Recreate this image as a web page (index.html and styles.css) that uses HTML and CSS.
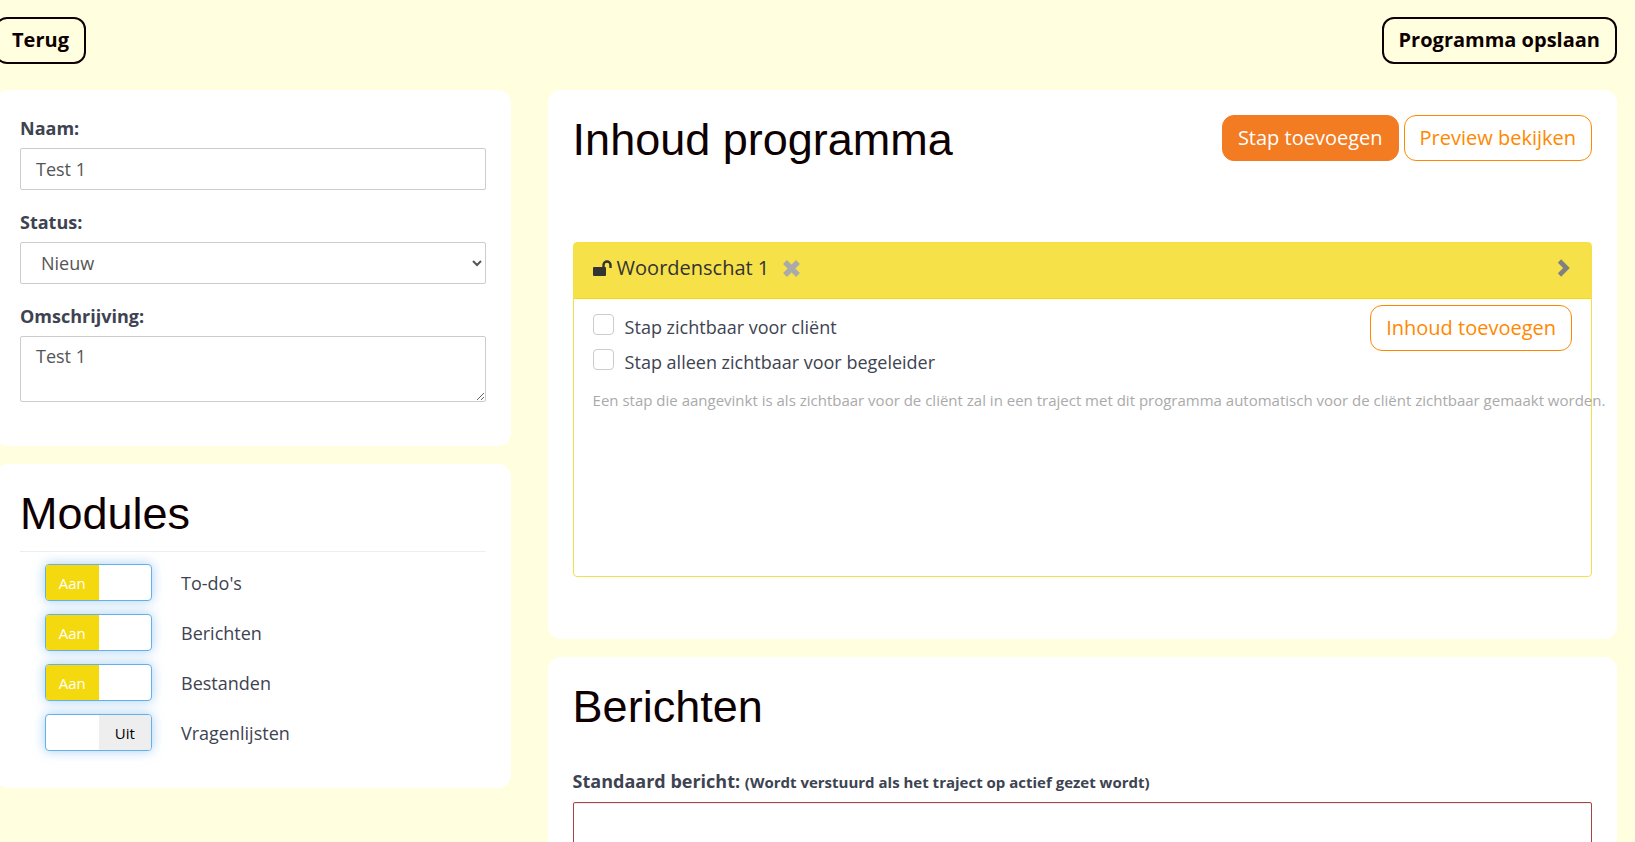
FILE: index.html
```html
<!DOCTYPE html>
<html lang="nl">
<head>
    <meta charset="UTF-8">
    <meta name="viewport" content="width=device-width, initial-scale=1.0">
    <title>Programma bewerken</title>
    <link rel="stylesheet" href="styles.css">
</head>
<body>
    <div class="page">
        <div class="top-bar">
            <button type="button" class="btn btn-dark">Terug</button>
            <button type="submit" form="programma" class="btn btn-dark">Programma opslaan</button>
        </div>

        <form id="programma" class="columns">
            <div class="column">
                <div class="card">
                    <div class="form-group">
                        <label for="naam">Naam:</label>
                        <input type="text" id="naam" class="form-control" value="Test 1">
                    </div>
                    <div class="form-group">
                        <label for="status">Status:</label>
                        <select id="status" class="form-control">
                            <option>Nieuw</option>
                        </select>
                    </div>
                    <div class="form-group">
                        <label for="omschrijving">Omschrijving:</label>
                        <textarea id="omschrijving" class="form-control description">Test 1</textarea>
                    </div>
                </div>

                <div class="card modules">
                    <h2>Modules</h2>
                    <hr>
                    <label class="module">
                        <input type="checkbox" checked>
                        <span class="switch"><span class="on">Aan</span><span class="off">Uit</span></span>
                        <span>To-do's</span>
                    </label>
                    <label class="module">
                        <input type="checkbox" checked>
                        <span class="switch"><span class="on">Aan</span><span class="off">Uit</span></span>
                        <span>Berichten</span>
                    </label>
                    <label class="module">
                        <input type="checkbox" checked>
                        <span class="switch"><span class="on">Aan</span><span class="off">Uit</span></span>
                        <span>Bestanden</span>
                    </label>
                    <label class="module">
                        <input type="checkbox">
                        <span class="switch"><span class="on">Aan</span><span class="off">Uit</span></span>
                        <span>Vragenlijsten</span>
                    </label>
                </div>
            </div>

            <div class="column">
                <div class="card content">
                    <div class="card-header">
                        <h2>Inhoud programma</h2>
                        <div class="buttons">
                            <button type="button" class="btn btn-primary">Stap toevoegen</button>
                            <button type="button" class="btn btn-outline">Preview bekijken</button>
                        </div>
                    </div>

                    <div class="step">
                        <div class="step-header">
                            <svg class="lock" viewBox="0 0 19 16" width="19" height="16" aria-hidden="true">
                                <rect x="0" y="7" width="13" height="9" rx="1" fill="#333"/>
                                <path d="M10.5 8V5a3.5 3.5 0 0 1 7 0v3" fill="none" stroke="#333" stroke-width="2.4"/>
                            </svg>
                            <span class="step-title">Woordenschat 1</span>
                            <button type="button" class="icon-btn" aria-label="Verwijderen">
                                <svg viewBox="0 0 17 17" width="17" height="17">
                                    <path d="M2 2l13 13M15 2l-13 13" stroke="#aaa" stroke-width="5.4"/>
                                </svg>
                            </button>
                            <button type="button" class="icon-btn toggle-step" aria-label="Uitklappen">
                                <svg viewBox="0 0 14 18" width="14" height="18">
                                    <path d="M2.5 2l7 7-7 7" fill="none" stroke="#808080" stroke-width="4.6"/>
                                </svg>
                            </button>
                        </div>
                        <div class="step-body">
                            <div class="step-options">
                                <div>
                                    <label class="check"><input type="checkbox"><span>Stap zichtbaar voor cliënt</span></label>
                                    <label class="check"><input type="checkbox"><span>Stap alleen zichtbaar voor begeleider</span></label>
                                </div>
                                <button type="button" class="btn btn-outline">Inhoud toevoegen</button>
                            </div>
                            <p class="hint">Een stap die aangevinkt is als zichtbaar voor de cliënt zal in een traject met dit programma automatisch voor de cliënt zichtbaar gemaakt worden.</p>
                        </div>
                    </div>
                </div>

                <div class="card messages">
                    <h2>Berichten</h2>
                    <div class="form-group">
                        <label for="bericht">Standaard bericht: <small>(Wordt verstuurd als het traject op actief gezet wordt)</small></label>
                        <textarea id="bericht" class="form-control message"></textarea>
                    </div>
                </div>
            </div>
        </form>
    </div>
</body>
</html>
```

FILE: styles.css
```css
* {
    box-sizing: border-box;
}
body {
    margin: 0;
    background-color: #ffffdf;
    color: #3d4351;
    font-family: "Open Sans", sans-serif;
    font-size: 18px;
    line-height: 26px;
    overflow-x: hidden;
}
.page {
    margin: 0 18px 0 -5px;
    padding-top: 17px;
}
.top-bar {
    display: flex;
    justify-content: space-between;
    margin-bottom: 26px;
}
.columns {
    display: grid;
    grid-template-columns: calc(33.33% - 25px) minmax(0, 1fr);
    column-gap: 37px;
}
.card {
    background-color: #fff;
    border-radius: 13px;
    padding: 25px;
    margin-bottom: 18px;
}
h2 {
    margin: 0;
    color: #0e0000;
    font-family: "Liberation Sans", Arial, sans-serif;
    font-size: 45px;
    font-weight: normal;
    line-height: 50px;
}

/* Knoppen */
.btn {
    height: 46px;
    padding: 0 15px;
    border: 1px solid;
    border-radius: 12px;
    background-color: transparent;
    font-family: inherit;
    font-size: 20px;
    line-height: 28px;
    cursor: pointer;
}
.btn-dark {
    height: 47px;
    padding: 0 15px 2px;
    border: 2px solid #0e0000;
    color: #0e0000;
    font-weight: bold;
}
.btn-primary {
    border-color: #f37b21;
    background-color: #f37b21;
    color: #fff;
}
.btn-outline {
    border-color: #ff8800;
    background-color: #fff;
    color: #ff8800;
}
.icon-btn {
    display: flex;
    padding: 0;
    border: none;
    background: none;
    cursor: pointer;
}

/* Formulier */
.form-group {
    margin-bottom: 19px;
}
.form-group label {
    display: block;
    margin-bottom: 7px;
    font-weight: bold;
}
.form-group small {
    font-size: 15px;
}
.form-control {
    display: block;
    width: 100%;
    height: 42px;
    padding: 7px 15px;
    border: 1px solid #ccc;
    border-radius: 2px;
    background-color: #fff;
    color: #555;
    font-family: inherit;
    font-size: 18px;
    line-height: 26px;
}
select.form-control {
    padding-left: 16px;
}
.description {
    height: 66px;
    padding-top: 6px;
}
.message {
    height: 120px;
    border-color: #a94442;
    box-shadow: inset 0 1px 1px rgba(0, 0, 0, 0.075);
}

/* Modules */
.modules {
    padding-bottom: 37px;
}
.modules hr {
    margin: 12px 0;
    border: 0;
    border-top: 1px solid #eee;
}
.module {
    position: relative;
    display: flex;
    align-items: center;
    gap: 29px;
    margin-left: 25px;
    cursor: pointer;
}
.module + .module {
    margin-top: 13px;
}
.module input {
    position: absolute;
    opacity: 0;
}
.switch {
    display: flex;
    width: 107px;
    height: 37px;
    border: 1px solid #66afe9;
    border-radius: 4px;
    overflow: hidden;
    background-color: #fff;
    box-shadow: 0 0 12px rgba(102, 175, 233, 0.6);
    font-size: 15px;
    line-height: 36px;
    text-align: center;
}
.on,
.off {
    flex: 1;
    visibility: hidden;
}
.on {
    background-color: #f5d90f;
    color: #fff;
}
.off {
    background-color: #eee;
    color: #000;
}
.module input:checked + .switch .on,
.module input:not(:checked) + .switch .off {
    visibility: visible;
}

/* Inhoud programma */
.content {
    padding-bottom: 62px;
}
.card-header {
    display: flex;
    justify-content: space-between;
    align-items: flex-start;
    margin-bottom: 77px;
}
.buttons {
    display: flex;
    gap: 5px;
}
.step {
    height: 335px;
    border: 1px solid #f6e049;
    border-radius: 4px;
}
.step-header {
    display: flex;
    align-items: center;
    height: 56px;
    padding: 0 20px 5px 19px;
    border-bottom: 1px solid #f5d90f;
    background-color: #f6e149;
    color: #333;
    font-size: 20px;
}
.step-title {
    margin: 0 14px 0 5px;
}
.toggle-step {
    margin-left: auto;
}
.step-body {
    padding: 6px 19px;
}
.step-options {
    display: flex;
    justify-content: space-between;
    align-items: flex-start;
}
.check {
    display: flex;
    gap: 11px;
    height: 35px;
    padding-top: 9px;
}
.check input {
    appearance: none;
    width: 21px;
    height: 21px;
    margin: 0;
    border: 1px solid #ccc;
    border-radius: 4px;
}
.hint {
    margin: 12px 0 0;
    color: #aaa;
    font-size: 15px;
    white-space: nowrap;
}

/* Berichten */
.messages h2 {
    margin-bottom: 36px;
}
```
